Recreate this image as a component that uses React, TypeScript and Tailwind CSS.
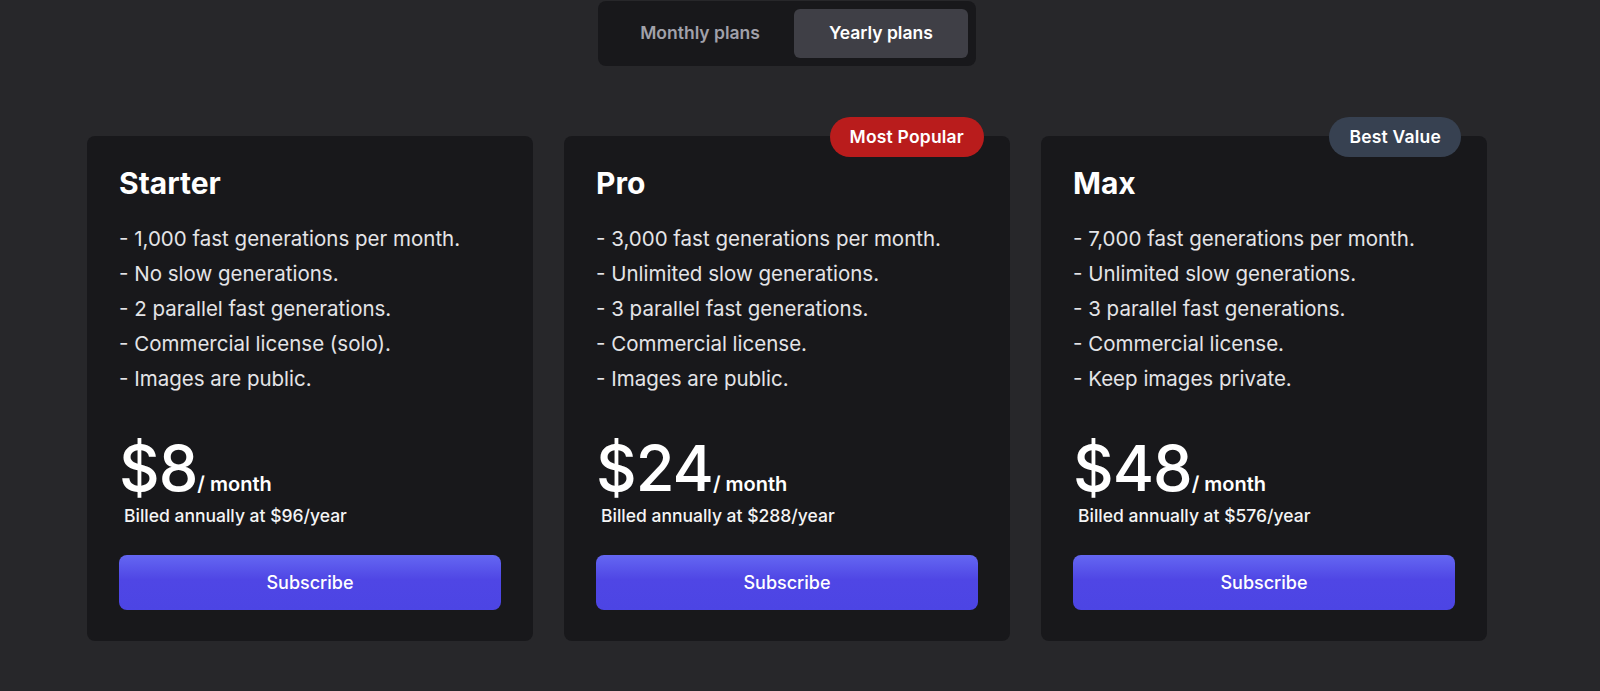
import React from 'react'

type Plan = {
  name: string
  features: string[]
  price: string
  billed: string
  badge?: { label: string; className: string }
}

const plans: Plan[] = [
  {
    name: 'Starter',
    features: [
      '- 1,000 fast generations per month.',
      '- No slow generations.',
      '- 2 parallel fast generations.',
      '- Commercial license (solo).',
      '- Images are public.',
    ],
    price: '$8',
    billed: 'Billed annually at $96/year',
  },
  {
    name: 'Pro',
    features: [
      '- 3,000 fast generations per month.',
      '- Unlimited slow generations.',
      '- 3 parallel fast generations.',
      '- Commercial license.',
      '- Images are public.',
    ],
    price: '$24',
    billed: 'Billed annually at $288/year',
    badge: { label: 'Most Popular', className: 'bg-[#b91c1c]' },
  },
  {
    name: 'Max',
    features: [
      '- 7,000 fast generations per month.',
      '- Unlimited slow generations.',
      '- 3 parallel fast generations.',
      '- Commercial license.',
      '- Keep images private.',
    ],
    price: '$48',
    billed: 'Billed annually at $576/year',
    badge: { label: 'Best Value', className: 'bg-[#374151]' },
  },
]

function PlanCard({ plan }: { plan: Plan }) {
  return (
    <div className="relative w-[446px] h-[505px] bg-[#18181b] rounded-lg px-8 pt-[30px] pb-[31px] flex flex-col">
      {plan.badge && (
        <span
          className={`absolute -top-[19px] right-[26px] h-10 px-5 rounded-full flex items-center text-white text-[17.5px] font-semibold tracking-[0.2px] ${plan.badge.className}`}
        >
          {plan.badge.label}
        </span>
      )}

      <h2 className="text-white text-[30px] leading-[34px] font-bold">{plan.name}</h2>

      <ul className="mt-[21px] text-[#e4e4e7] text-[20.5px] leading-[35px]">
        {plan.features.map((f) => (
          <li key={f}>{f}</li>
        ))}
      </ul>

      <div className="mt-10 flex items-baseline">
        <span className="text-white text-[63px] leading-[64px] font-medium tracking-[-1px]">{plan.price}</span>
        <span className="text-white text-[20px] font-semibold">/ month</span>
      </div>
      <p className="mt-1 ml-[5px] text-[#f4f4f5] text-[17.5px] leading-6 font-medium">{plan.billed}</p>

      <button className="mt-[27px] h-[55px] w-full rounded-lg bg-[linear-gradient(to_bottom,#6467f2,#4f46e5_45%,#4c45e4)] text-white text-[18px] font-medium">
        Subscribe
      </button>
    </div>
  )
}

export default function App() {
  return (
    <div
      className="min-h-[691px] w-full bg-[#27272a]"
      style={{ fontFamily: 'Inter, "Noto Sans", sans-serif' }}
    >
      <div className="w-[1574px] flex flex-col items-center pt-px">
        {/* Billing toggle */}
        <div className="flex p-2 bg-[#18181b] rounded-lg">
          <button className="h-[49px] px-[34px] rounded-md text-[#a1a1aa] text-[17.5px] font-semibold">
            Monthly plans
          </button>
          <button className="h-[49px] px-[35px] rounded-md bg-[#3f3f46] text-white text-[17.5px] font-semibold">
            Yearly plans
          </button>
        </div>

        {/* Plans */}
        <div className="mt-[70px] flex gap-[31px]">
          {plans.map((p) => (
            <PlanCard key={p.name} plan={p} />
          ))}
        </div>
      </div>
    </div>
  )
}
